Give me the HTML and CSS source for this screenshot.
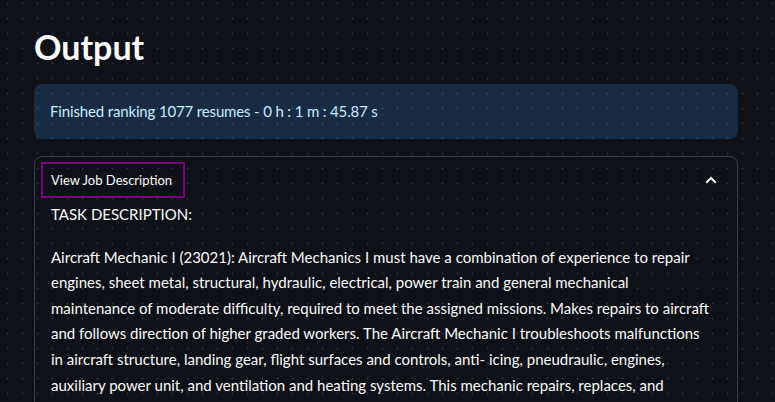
FILE: index.html
```html
<!DOCTYPE html>
<html lang="en">
<head>
<meta charset="utf-8">
<title>Output</title>
<link rel="stylesheet" href="styles.css">
</head>
<body>
<main class="main">
  <h1 class="title">Output</h1>
  <div class="alert">Finished ranking 1077 resumes - 0 h : 1 m : 45.87 s</div>
  <section class="expander">
    <div class="summary">
      <span class="summary-label">View Job Description</span>
      <svg class="chevron" width="12" height="8" viewBox="0 0 12 8" aria-hidden="true">
        <polyline points="1.2,6.8 6,2 10.8,6.8" fill="none" stroke="#fafafa" stroke-width="2"/>
      </svg>
    </div>
    <div class="expander-body">
      <p class="heading">TASK DESCRIPTION:</p>
      <p class="para">Aircraft Mechanic I (23021): Aircraft Mechanics I must have a combination of experience to repair<br>
engines, sheet metal, structural, hydraulic, electrical, power train and general mechanical<br>
maintenance of moderate difficulty, required to meet the assigned missions. Makes repairs to aircraft<br>
and follows direction of higher graded workers. The Aircraft Mechanic I troubleshoots malfunctions<br>
in aircraft structure, landing gear, flight surfaces and controls, anti- icing, pneudraulic, engines,<br>
auxiliary power unit, and ventilation and heating systems. This mechanic repairs, replaces, and</p>
    </div>
  </section>
</main>
</body>
</html>
```
FILE: styles.css
```css
html, body {
  margin: 0;
  padding: 0;
  overflow: hidden;
}
body {
  background-color: #0e1117;
  background-image: radial-gradient(circle, #30333b 0.9px, transparent 1.1px);
  background-size: 15px 15px;
  background-position: 0 -4px;
  color: #fafafa;
  font-family: "Lato", "Liberation Sans", sans-serif;
  font-size: 15px;
}
.main {
  padding: 27px 37px 0 34px;
  display: flex;
  flex-direction: column;
}
.title {
  margin: 0 0 18px;
  font-size: 34px;
  font-weight: 700;
  line-height: 39px;
  color: #fafafa;
}
.alert {
  background: rgba(61, 157, 243, 0.2);
  color: #c7ebff;
  border-radius: 8px;
  padding: 15px 16px;
  line-height: 25px;
  letter-spacing: -0.15px;
  margin-bottom: 17px;
}
.expander {
  border: 1px solid rgba(250, 250, 250, 0.2);
  border-radius: 8px;
}
.summary {
  display: flex;
  align-items: center;
  justify-content: space-between;
  margin: 5px 20px 0 6px;
}
.summary-label {
  display: flex;
  align-items: center;
  box-sizing: border-box;
  height: 36px;
  padding: 0 11px 0 8px;
  border: 2px solid #800080;
  font-size: 13px;
}
.chevron {
  display: block;
}
.expander-body {
  padding: 4px 16px 16px;
}
.heading {
  margin: 0;
  line-height: 25.6px;
}
.para {
  margin: 17px 0 0;
  line-height: 25.6px;
  white-space: nowrap;
}
```
